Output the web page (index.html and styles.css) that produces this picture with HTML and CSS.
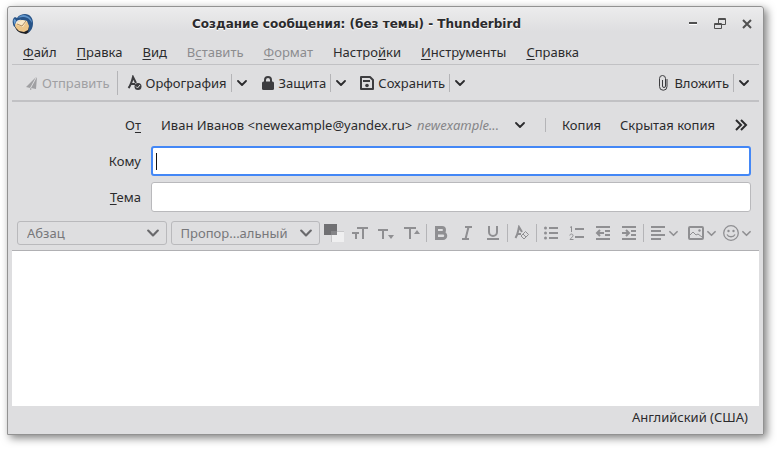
FILE: index.html
```html
<!DOCTYPE html>
<html lang="ru">
<head>
<meta charset="utf-8">
<title>Создание сообщения: (без темы) - Thunderbird</title>
<link rel="stylesheet" href="styles.css">
</head>
<body>
<svg class="sprite" aria-hidden="true">
  <symbol id="chevron" viewBox="0 0 10 10"><path d="M1 3l4 4 4-4" fill="none" stroke="currentColor" stroke-width="1.800" stroke-linecap="round" stroke-linejoin="round"/></symbol>
</svg>
<main class="window">
  <header class="titlebar">
    <svg class="app-icon" viewBox="0 0 22 22" aria-hidden="true">
      <path d="M3 14c1 3 3 5 6 6l5 1c4-2 6-6 6-10l-5-4z" fill="#1b1d22"/>
      <path d="M1 11c-1-3 0-6 2-7l2 1c2-3 5-4 8-4 5 0 8 4 8 9s-2 8-5 10c1-4 1-8-2-11C10 6 6 6 4 9l-1 5c-1 0-2-2-2-3z" fill="#285488"/>
      <path d="M6 5c2-3 6-4 9-2 3 1 5 4 5 7-2-4-5-6-8-6-2 0-4 0-6 1z" fill="#5f94cb"/>
      <path d="M2 6l2 1-1 5c-1-2-2-4-1-6z" fill="#6ba0d6"/>
      <path d="M3 11l6-4 6 1 2 5-1 4-4 2-5-1-3-3z" fill="#edc68a"/>
      <path d="M4 10l6-3 5 1-4 6-6-2z" fill="#fae9c8"/>
      <path d="M5 11l5 2 4-5" fill="none" stroke="#9a7348" stroke-width=".8"/>
    </svg>
    <h1 class="title">Создание сообщения: (без темы) - Thunderbird</h1>
    <div class="window-buttons">
      <button aria-label="Свернуть"><svg viewBox="0 0 12 12"><path d="M2 6.500h8" stroke="#fff"/><path d="M2 5h8" stroke="#505050" stroke-width="2"/></svg></button>
      <button aria-label="Восстановить"><svg viewBox="0 0 12 12"><path d="M4.500 5V.5h7v6H8M.5 5.500h7v5h-7zM.5 6.500h7M4.500 1.500h7" fill="none" stroke="#505050"/></svg></button>
      <button aria-label="Закрыть"><svg viewBox="0 0 12 12"><path d="M2 2l8 8M10 2l-8 8" stroke="#505050" stroke-width="2"/></svg></button>
    </div>
  </header>

  <nav class="menubar">
    <button><u>Ф</u>айл</button>
    <button><u>П</u>равка</button>
    <button><u>В</u>ид</button>
    <button disabled>В<u>с</u>тавить</button>
    <button disabled><u>Ф</u>ормат</button>
    <button>Настро<u>й</u>ки</button>
    <button><u>И</u>нструменты</button>
    <button><u>С</u>правка</button>
  </nav>

  <div class="toolbar">
    <button class="tool send" disabled><svg viewBox="0 0 16 16"><path d="M13 2L3 12l4 1zM14 2L8 13l5 1z" fill="currentColor"/><path d="M7 13v2l2-1z" fill="currentColor"/></svg>Отправить</button>
    <span class="rule tall"></span>
    <button class="tool"><svg viewBox="0 0 16 16"><path d="M2.500 13C5 10 6 6 7 2l3 6M4 9h5" fill="none" stroke="currentColor" stroke-width="2"/><circle cx="12" cy="11.500" r="3.500" fill="currentColor"/><path d="M10 11.500l1.500 1.500 2.500-3" fill="none" stroke="#ddd"/></svg>Орфография</button>
    <span class="rule"></span>
    <button class="drop" aria-label="Язык орфографии"><svg><use href="#chevron"/></svg></button>
    <button class="tool"><svg viewBox="0 0 16 16"><rect x="2" y="6.500" width="12" height="8.500" rx="1.500" fill="currentColor"/><path d="M5 8V5a3 3 0 0 1 6 0v3" fill="none" stroke="currentColor" stroke-width="2"/></svg>Защита</button>
    <span class="rule"></span>
    <button class="drop" aria-label="Параметры защиты"><svg><use href="#chevron"/></svg></button>
    <button class="tool"><svg viewBox="0 0 16 16"><path d="M2 2h9l3 3v9H2z" fill="none" stroke="currentColor" stroke-width="2" stroke-linejoin="round"/><path d="M4 5h7v2H4z" fill="currentColor"/><circle cx="8" cy="10.500" r="1.800" fill="currentColor"/></svg>Сохранить</button>
    <span class="rule"></span>
    <button class="drop" aria-label="Варианты сохранения"><svg><use href="#chevron"/></svg></button>
    <button class="tool attach"><svg viewBox="0 0 16 16"><path d="M7.500 5v6a1.500 1.500 0 0 0 3 0V3.500a3 3 0 0 0-6 0v8a3.500 3.500 0 0 0 7.500 0V4" fill="none" stroke="currentColor"/></svg>Вложить</button>
    <span class="rule"></span>
    <button class="drop" aria-label="Варианты вложения"><svg><use href="#chevron"/></svg></button>
  </div>

  <form class="headers">
    <label for="from">О<u>т</u></label>
    <div class="from-row">
      <div class="identity">
        <select id="from"><option>Иван Иванов &lt;newexample@yandex.ru&gt;</option></select>
        <span class="account">newexample...</span>
        <svg class="arrow"><use href="#chevron"/></svg>
      </div>
      <span class="rule short"></span>
      <button type="button">Копия</button>
      <button type="button">Скрытая копия</button>
      <button type="button" class="more" aria-label="Ещё"><svg viewBox="0 0 14 14"><path d="M2 2l5 5-5 5M7 2l5 5-5 5" fill="none" stroke="currentColor" stroke-width="2"/></svg></button>
    </div>
    <label for="to">Кому</label>
    <div class="to-field"><input id="to" type="text"><span class="caret"></span></div>
    <label for="subject"><u>Т</u>ема</label>
    <input id="subject" type="text">
  </form>

  <div class="formatbar">
    <div class="pickers">
      <div class="picker"><select aria-label="Стиль абзаца" disabled><option>Абзац</option></select><svg><use href="#chevron"/></svg></div>
      <div class="picker"><select aria-label="Шрифт" disabled><option>Пропор...альный</option></select><svg><use href="#chevron"/></svg></div>
    </div>
    <div class="format-buttons">
      <button disabled aria-label="Цвет"><svg class="swatch" viewBox="0 0 20 18"><path d="M0 0h13v11H0z" fill="#707073"/><path d="M7 7h13v11H7z" fill="#c7c7c9"/><path d="M8 8h12v10H8z" fill="#efeff0"/><path d="M7 7h6v4H7z" fill="#858588"/></svg></button>
      <button disabled aria-label="Размер"><svg viewBox="0 0 16 16"><path d="M5 3h11M11 2v12M0 8h7M4 8v6" fill="none" stroke="currentColor" stroke-width="2"/></svg></button>
      <button disabled aria-label="Мельче"><svg viewBox="0 0 16 16"><path d="M0 5h10M5 4v10" stroke="currentColor" stroke-width="2"/><path d="M10 10h6l-3 4z" fill="currentColor"/></svg></button>
      <button disabled aria-label="Крупнее"><svg viewBox="0 0 16 16"><path d="M0 3h12M6 2v12" stroke="currentColor" stroke-width="2"/><path d="M10 9h6l-3-4z" fill="currentColor"/></svg></button>
      <span class="rule"></span>
      <button disabled aria-label="Полужирный"><svg viewBox="0 0 16 16"><path d="M3.500 2.500H9a2.500 2.500 0 0 1 0 5H3.500zM3.500 8H10a2.700 2.700 0 0 1 0 5.500H3.500z" fill="none" stroke="currentColor" stroke-width="3"/></svg></button>
      <button disabled aria-label="Курсив"><svg viewBox="0 0 16 16"><path d="M6 2h7M3 14h7M9.500 2l-3 12" fill="none" stroke="currentColor" stroke-width="2"/></svg></button>
      <button disabled aria-label="Подчёркнутый"><svg viewBox="0 0 16 16"><path d="M4 1v6a4 4 0 0 0 8 0V1M2 14h12" fill="none" stroke="currentColor" stroke-width="2"/></svg></button>
      <span class="rule"></span>
      <button disabled aria-label="Убрать стили"><svg viewBox="0 0 16 16"><path d="M1.500 13C4 9 4 6 5 2l3 5M3 9h4" fill="none" stroke="currentColor" stroke-width="2"/><path d="M11.500 6.500l3 3-4.500 4.500-3-3zM9 9l3 3" fill="none" stroke="currentColor"/></svg></button>
      <span class="rule"></span>
      <button disabled aria-label="Маркированный список"><svg viewBox="0 0 16 16"><path d="M6 3h9M6 8h9M6 13h9" stroke="currentColor" stroke-width="2"/><path d="M2.500 3h0M2.500 8h0M2.500 13h0" stroke="currentColor" stroke-width="3" stroke-linecap="round"/></svg></button>
      <button disabled aria-label="Нумерованный список"><svg viewBox="0 0 16 16"><path d="M6 4h9M6 12h9" stroke="currentColor" stroke-width="2"/><path d="M1 2.500L2.500 1.500V7M.8 10.500c.2-2 3.200-2 3.200 0 0 1-1.500 2-3 4h3.500" fill="none" stroke="currentColor"/></svg></button>
      <button disabled aria-label="Уменьшить отступ"><svg viewBox="0 0 16 16"><path d="M1 2h14M10 6h5M10 10h5M1 14h14M2 8h7M5 5L2 8l3 3" fill="none" stroke="currentColor" stroke-width="2"/></svg></button>
      <button disabled aria-label="Увеличить отступ"><svg viewBox="0 0 16 16"><path d="M1 2h14M10 6h5M10 10h5M1 14h14M1 8h7M5 5l3 3-3 3" fill="none" stroke="currentColor" stroke-width="2"/></svg></button>
      <span class="rule"></span>
      <button disabled class="menu" aria-label="Выравнивание"><svg viewBox="0 0 16 16"><path d="M1 2h14M1 6h10M1 10h14M1 14h10" stroke="currentColor" stroke-width="2"/></svg><svg class="arrow"><use href="#chevron"/></svg></button>
      <button disabled class="menu" aria-label="Вставить"><svg viewBox="0 0 16 16"><rect x="1" y="2" width="14" height="12" rx="1" fill="none" stroke="currentColor" stroke-width="2"/><path d="M2 10l3-3 3 3 2-1 4 3" fill="none" stroke="currentColor"/><circle cx="11.500" cy="5.500" r="1.200" fill="currentColor"/></svg><svg class="arrow"><use href="#chevron"/></svg></button>
      <button disabled class="menu" aria-label="Смайлик"><svg viewBox="0 0 16 16"><circle cx="8" cy="8" r="7.300" fill="none" stroke="currentColor" stroke-width="1.300"/><circle cx="5.500" cy="6" r="1.200" fill="currentColor"/><circle cx="10.500" cy="6" r="1.200" fill="currentColor"/><path d="M4 9.500c1.500 3 6.500 3 8 0" fill="none" stroke="currentColor" stroke-width="1.300"/></svg><svg class="arrow"><use href="#chevron"/></svg></button>
    </div>
  </div>

  <textarea class="editor" aria-label="Текст сообщения"></textarea>
  <footer class="statusbar">Английский (США)</footer>
</main>
</body>
</html>
```
FILE: styles.css
```css
* { box-sizing: border-box; }

body {
  margin: 0;
  padding: 6px 13px 14px 7px;
  height: 100vh;
  background: #fff;
  color: #2b2b2d;
  font: 13px/18px "Noto Sans", sans-serif;
}

.sprite { position: absolute; width: 0; height: 0; }
svg { display: block; flex: none; }

button, input, select, textarea {
  margin: 0;
  padding: 0;
  border: 0;
  background: none;
  color: inherit;
  font: inherit;
  outline: 0;
}

select { appearance: none; opacity: 1; }

u { text-decoration: underline; text-underline-offset: 2px; text-decoration-skip-ink: none; }

.window {
  display: flex;
  flex-direction: column;
  height: 100%;
  padding: 0 4px;
  border: 1px solid #929292;
  border-radius: 3px 3px 0 0;
  background: linear-gradient(#ececed, #dedee0 24px);
  box-shadow: 3px 3px 8px rgba(0, 0, 0, .5);
}

.titlebar { display: flex; align-items: center; height: 34px; }
.app-icon { width: 22px; height: 22px; }
.title {
  flex: 1;
  margin: 0 8px 0 0;
  text-align: center;
  font: bold 12px/18px "DejaVu Sans", sans-serif;
  text-shadow: 0 1px 0 #fff;
}
.window-buttons { display: flex; gap: 15px; padding-right: 6px; }
.window-buttons svg { width: 12px; height: 12px; }

.menubar {
  display: flex;
  height: 24px;
  padding: 0 0 2px 1px;
  border-bottom: 1px solid #c1c1c4;
}
.menubar button { padding: 0 10px; }
.menubar button:disabled { color: #8c8c8f; }

.toolbar {
  display: flex;
  align-items: center;
  height: 37px;
  padding: 1px 5px 0 0;
  border-bottom: 2px solid #c1c1c4;
}
.rule { width: 1px; height: 18px; background: #b4b4b7; }
.rule.tall { height: 24px; }
.rule.short { height: 14px; }
.tool { display: flex; align-items: center; gap: 3px; padding: 0 4px 0 8px; }
.tool svg { width: 16px; height: 16px; color: #3d3d40; }
.tool.send { padding: 0 8px 0 11px; }
.tool:disabled, .tool:disabled svg { color: #a0a0a3; }
.tool.attach { margin-left: auto; }
.drop { padding: 0 5px; }
.drop svg { width: 10px; height: 10px; }

.headers {
  display: grid;
  grid-template-columns: 129px 1fr;
  column-gap: 10px;
  row-gap: 6px;
  align-items: center;
  padding: 7px 8px 8px 0;
}
.headers label { text-align: right; }
.headers input {
  display: block;
  width: 100%;
  height: 30px;
  padding: 0 6px;
  border: 1px solid #b9b9bc;
  border-radius: 3px;
  background: #fff;
}
.to-field { position: relative; }
.headers .to-field input { border: 2px solid #4387f6; }
.caret {
  position: absolute;
  left: 5px;
  top: 7px;
  width: 1px;
  height: 17px;
  background: #111;
}
.from-row { display: flex; align-items: center; height: 31px; }
.identity { display: grid; grid-template-columns: auto 1fr auto; align-items: center; flex: 1; padding-left: 10px; }
.identity select { grid-area: 1 / 1; }
.account { margin-left: 4px; color: #858588; font-style: italic; }
.arrow { width: 10px; height: 10px; }
.from-row .rule { margin: 0 16px 0 20px; }
.from-row button + button { margin-left: 19px; }
.from-row .more { padding-right: 3px; }
.more svg { width: 14px; height: 14px; }

.formatbar {
  display: flex;
  align-items: center;
  gap: 1px;
  height: 31px;
  padding: 0 7px 4px 5px;
  border-bottom: 1px solid #b0b0b3;
  color: #8f8f92;
}
.pickers { display: flex; flex: 1; gap: 4px; }
.picker { display: grid; align-items: center; flex: 1; }
.picker select {
  grid-area: 1 / 1;
  width: 100%;
  height: 24px;
  padding: 0 30px 0 9px;
  border: 1px solid #b9b9bc;
  border-radius: 3px;
  color: #77777a;
}
.picker svg {
  grid-area: 1 / 1;
  justify-self: end;
  width: 12px;
  height: 12px;
  margin-right: 8px;
  color: #69696c;
  pointer-events: none;
}
.format-buttons { display: flex; align-items: center; }
.format-buttons button { display: flex; align-items: center; justify-content: center; width: 26px; }
.format-buttons svg { width: 16px; height: 16px; }
.format-buttons .swatch { width: 20px; height: 18px; }
.format-buttons .rule { margin: 0 1px; }
.format-buttons .menu { width: 38px; gap: 3px; }
.format-buttons .menu:last-child { width: 31px; }
.format-buttons .arrow { width: 9px; height: 9px; }

.editor { flex: 1; min-height: 0; background: #fff; resize: none; }
.statusbar { padding: 2px 11px 8px 0; text-align: right; }
```
